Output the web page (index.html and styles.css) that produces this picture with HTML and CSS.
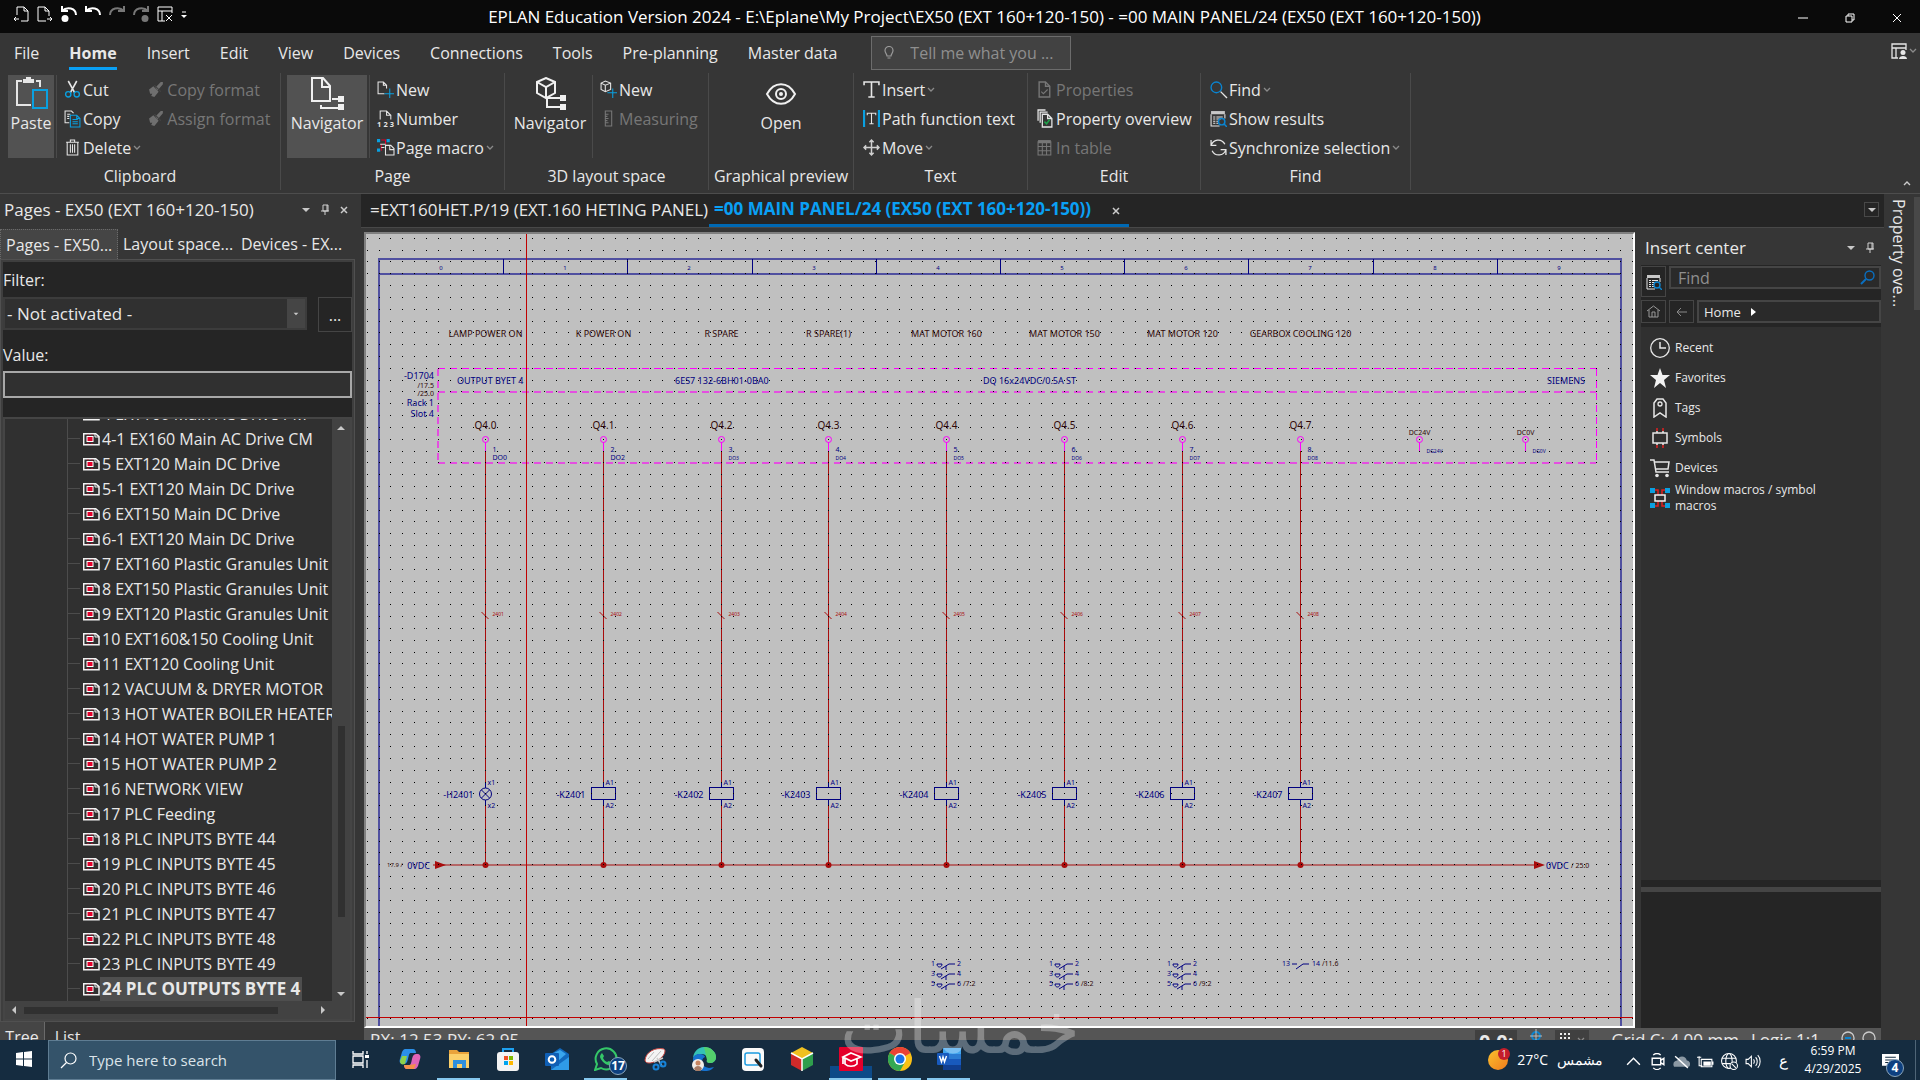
FILE: index.html
```
<!DOCTYPE html>
<html lang="en">
<head>
    <meta charset="UTF-8">
    <meta name="viewport" content="width=device-width, initial-scale=1.0">
    <title>EPLAN Education Version 2024</title>
    <link rel="stylesheet" href="styles.css">
</head>
<body>
    <svg class="defs" aria-hidden="true">
        <symbol id="chev" viewBox="0 0 8 8"><path d="M1 2l3 3 3-3" fill="none" stroke="#8a8a8a" stroke-width="1.3"/></symbol>
        <symbol id="down" viewBox="0 0 10 10"><path d="M1 3h8L5 7z" fill="#c8c8c8"/></symbol>
        <symbol id="pin" viewBox="0 0 10 12"><path d="M3 1h5v6H3zM1 7h8M5 7v4M7 1v6" fill="none" stroke="#d0d0d0"/></symbol>
        <symbol id="brush" viewBox="0 0 16 16"><path d="M1 8l4-3 5 5-4 5-3-1 1-2-2 0zM7 6l5-5h2v2l-5 6z" fill="#6f6f6f"/><path d="M6 4l6 6" stroke="#444"/></symbol>
        <symbol id="results" viewBox="0 0 16 16"><path d="M1 1h13v3H1z" fill="#c8c8c8"/><path d="M1 4v11h8M14 4v4M3 6.500h2m1 0h6M3 8.500h2m1 0h4M3 10.500h2m1 0h2M3 12.500h2m1 0h2" fill="none" stroke="#e6e6e6"/><circle cx="11" cy="11" r="3" fill="none" stroke="#0a84d0" stroke-width="1.4"/><path d="M13 13l3 3" stroke="#0a84d0" stroke-width="1.4"/></symbol>
        <symbol id="schem" viewBox="0 0 17 14"><path d="M.7 1.7h12l3.3 3v8H.7z" fill="none" stroke="#f2f2f2" stroke-width="1.5"/><path d="M12 2v3h4" fill="none" stroke="#f2f2f2"/><rect x="4" y="4.500" width="6" height="5" fill="#e4002b" stroke="#fff"/><path d="M5 2.500v1M9 2.500v1M5 11v1M9 11v1" stroke="#e4002b"/></symbol>
        <symbol id="doc" viewBox="0 0 16 16"><path d="M2 1h6l4 4v10H2z" fill="none" stroke="currentColor" stroke-width="1.300"/><path d="M8 1v4h4" fill="none" stroke="currentColor" stroke-width="1.300"/></symbol>
    </svg>

    <header class="titlebar">
        <div class="quick">
            <button aria-label="Previous page"><svg viewBox="0 0 16 16"><path d="M4 9V1h7l4 4v10H8M11 1v4h4M6 13H1m2-2l-2 2 2 2"/></svg></button>
            <button aria-label="Next page"><svg viewBox="0 0 16 16"><path d="M9 15H1V1h7l4 4v5M8 1v4h4M10 13h5m-2-2l2 2-2 2"/></svg></button>
            <button aria-label="Undo list"><svg viewBox="0 0 16 16"><path d="M1 5C6 0 15 2 15 9M1 0v5h6" stroke-width="2"/><circle cx="4" cy="12.500" r="3.500" fill="#fff" stroke="none"/></svg></button>
            <button aria-label="Undo"><svg viewBox="0 0 16 16"><path d="M1 5C6 0 15 2 15 9M1 0v5h6" stroke-width="2"/></svg></button>
            <button aria-label="Redo" class="off"><svg viewBox="0 0 16 16"><path d="M15 5C10 0 1 2 1 9M15 0v5H9" stroke-width="2"/></svg></button>
            <button aria-label="Redo list" class="off"><svg viewBox="0 0 16 16"><path d="M15 5C10 0 1 2 1 9M15 0v5H9" stroke-width="2"/><circle cx="12" cy="12.500" r="3.500" fill="#777" stroke="none"/></svg></button>
            <button aria-label="Close layout"><svg viewBox="0 0 16 16"><path d="M8 15H1V1h14v6M1 5h14M5 5v10M9 9l6 6M15 9l-6 6"/></svg></button>
            <button aria-label="More" class="tiny"><svg viewBox="0 0 6 16"><path d="M1 6h4"/><path d="M0 9h6l-3 3z" fill="#fff" stroke="none"/></svg></button>
        </div>
        <div class="caption">EPLAN Education Version 2024 - E:\Eplane\My Project\EX50 (EXT 160+120-150) - =00 MAIN PANEL/24 (EX50 (EXT 160+120-150))</div>
        <div class="win">
            <button aria-label="Minimize"><svg viewBox="0 0 10 10"><path d="M0 5h10"/></svg></button>
            <button aria-label="Restore"><svg viewBox="0 0 10 10"><path d="M1 3h6v6H1zM3 3V1h6v6H7"/></svg></button>
            <button aria-label="Close"><svg viewBox="0 0 10 10"><path d="M1 1l8 8M9 1L1 9"/></svg></button>
        </div>
    </header>

    <nav class="menu">
        <a href="#">File</a>
        <a href="#" class="active">Home</a>
        <a href="#">Insert</a>
        <a href="#">Edit</a>
        <a href="#">View</a>
        <a href="#">Devices</a>
        <a href="#">Connections</a>
        <a href="#">Tools</a>
        <a href="#">Pre-planning</a>
        <a href="#">Master data</a>
        <label class="tell">
            <svg viewBox="0 0 10 14" width="10" height="14"><path d="M3 10C3 8 1 7 1 4.500a4 4 0 018 0C9 7 7 8 7 10zM3.500 12h3" fill="none" stroke="#9a9a9a" stroke-width="1.200"/></svg>
            <input type="text" placeholder="Tell me what you ..." aria-label="Tell me what you want to do">
        </label>
        <button class="workspace" aria-label="Workspace">
            <svg viewBox="0 0 16 16" width="16" height="16"><path d="M7 15H1V1h14v6M1 5h14M5 5v10" fill="none" stroke="#e6e6e6" stroke-width="1.300"/><circle cx="12" cy="9.500" r="2.500" fill="#e6e6e6"/><path d="M8 16c0-4 8-4 8 0z" fill="#e6e6e6"/></svg>
            <svg width="8" height="8"><use href="#chev"/></svg>
        </button>
    </nav>

    <section class="ribbon">
        <div class="group clip">
            <div class="tools">
                <button class="big on"><svg viewBox="0 0 34 34"><path d="M8 4H3v24h14M22 4h4v6" fill="none" stroke="#e6e6e6" stroke-width="2"/><path d="M9 2h3V0h5v2h3v4H9z" fill="#e6e6e6"/><path d="M19 13h14v18H19z" fill="none" stroke="#0aa0e0" stroke-width="2"/></svg>Paste</button>
                <div class="stack">
                    <button><svg viewBox="0 0 16 16"><path d="M4 0l6 11M12 0L6 11" stroke="#e6e6e6" stroke-width="1.500"/><g fill="none" stroke="#0aa0e0" stroke-width="1.300"><circle cx="4" cy="12.500" r="2.500"/><circle cx="12" cy="12.500" r="2.500"/></g></svg>Cut</button>
                    <button><svg viewBox="0 0 16 16"><path d="M5 12H1V1h6l2 2M3 4h3M3 6h2M3 8h2" fill="none" stroke="#e6e6e6"/><path d="M6 5h6l3 3v8H6zM12 5v3h3M8 9h5M8 11h5M8 13h5" fill="none" stroke="#0aa0e0"/></svg>Copy</button>
                    <button><svg viewBox="0 0 16 16"><path d="M2 3h12M6 3V1h4v2M3 3v12h10V3M6 5v8M8 5v8M10 5v8" fill="none" stroke="#e6e6e6"/></svg>Delete<svg class="c"><use href="#chev"/></svg></button>
                </div>
                <div class="stack">
                    <button disabled><svg><use href="#brush"/></svg>Copy format</button>
                    <button disabled><svg><use href="#brush"/></svg>Assign format</button>
                </div>
            </div>
            <h2>Clipboard</h2>
        </div>
        <div class="group page">
            <div class="tools">
                <button class="big on"><svg viewBox="0 0 34 34"><path d="M2 1h11l7 8v15H2zM12 1v9h8M22 22h6M11 28v3h17" fill="none" stroke="#f0f0f0" stroke-width="2"/><path d="M28 19h6v6h-6zM28 27h6v6h-6z" fill="#f0f0f0"/></svg>Navigator</button>
                <div class="stack">
                    <button><svg viewBox="0 0 16 16"><path d="M7 12H1V1h5l3 3v3M6 1v3h3" fill="none" stroke="#e6e6e6"/><path d="M7 12h9M12 7v9" stroke="#0aa0e0"/></svg>New</button>
                    <button><svg viewBox="0 0 16 16"><path d="M3 9V1h6l4 4v4M9 1v4h4" fill="none" stroke="#e6e6e6"/><text x="0" y="16" class="ic">1</text><text x="6" y="16" class="ic">2</text><text x="12" y="16" class="ic">3</text></svg>Number</button>
                    <button><svg viewBox="0 0 16 16"><path d="M0 0h3v3H0zM9 0h3v3H9zM0 9h3v3H0z" fill="#0aa0e0"/><path d="M4 1h4v4M4 5v6" fill="none" stroke="#e4002b"/><path d="M3 5h5M4 8h3M8 6h5l3 3v6H8zM12 6v4h4" fill="none" stroke="#e6e6e6"/></svg>Page macro<svg class="c"><use href="#chev"/></svg></button>
                </div>
            </div>
            <h2>Page</h2>
        </div>
        <div class="group space">
            <div class="tools">
                <button class="big"><svg viewBox="0 0 34 34"><path d="M4 5l9-4 9 4v11l-9 5-9-5zM4 5l9 5 9-5M13 10v11M27 21H14v9h13" fill="none" stroke="#f0f0f0" stroke-width="2"/><path d="M27 18h6v6h-6zM27 27h6v6h-6z" fill="#f0f0f0"/></svg>Navigator</button>
                <div class="stack">
                    <button><svg viewBox="0 0 16 16"><path d="M1 2l4-2 5 2v6l-5 2-4-2zM1 2l4 2 5-2M5 4v6" fill="none" stroke="#e6e6e6"/><path d="M7 11h9M12 7v9" stroke="#0aa0e0"/></svg>New</button>
                    <button disabled><svg viewBox="0 0 16 16"><path d="M5 1h6v14H5zM5 4h3M5 6h2M5 8h3M5 10h2M5 12h3" fill="none" stroke="#777"/></svg>Measuring</button>
                </div>
            </div>
            <h2>3D layout space</h2>
        </div>
        <div class="group preview">
            <div class="tools">
                <button class="big"><svg viewBox="0 0 34 34"><path d="M3 17C10 4 24 4 31 17C24 30 10 30 3 17z" fill="none" stroke="#f0f0f0" stroke-width="2"/><circle cx="17" cy="17" r="5" fill="none" stroke="#f0f0f0" stroke-width="2"/><circle cx="17" cy="17" r="2" fill="#f0f0f0"/></svg>Open</button>
            </div>
            <h2>Graphical preview</h2>
        </div>
        <div class="group text">
            <div class="tools">
                <div class="stack">
                    <button><svg viewBox="0 0 16 16"><path d="M1 4V1h14v3M8 1v14M5 15h6" fill="none" stroke="#e6e6e6" stroke-width="1.500"/></svg>Insert<svg class="c"><use href="#chev"/></svg></button>
                    <button><svg viewBox="0 0 16 16"><path d="M1 0v16M15 0v16" stroke="#0aa0e0" stroke-width="2"/><path d="M4 5V3h8v2M8 3v10M6 13h4" fill="none" stroke="#e6e6e6"/></svg>Path function text</button>
                    <button><svg viewBox="0 0 16 16"><path d="M8 1v14M1 8h14M6 3l2-2 2 2M6 13l2 2 2-2M3 6L1 8l2 2M13 6l2 2-2 2" fill="none" stroke="#d0d0d0" stroke-width="1.400"/></svg>Move<svg class="c"><use href="#chev"/></svg></button>
                </div>
            </div>
            <h2>Text</h2>
        </div>
        <div class="group edit">
            <div class="tools">
                <div class="stack">
                    <button disabled><svg viewBox="0 0 16 16"><use href="#doc"/><path d="M4 10l2 2 4-4" fill="none" stroke="#777"/></svg>Properties</button>
                    <button><svg viewBox="0 0 16 16"><path d="M1 10V0h7M3 12V2h7M5 4h5l4 4v8H5zM10 4v4h4" fill="none" stroke="#e6e6e6" stroke-width="1.200"/><path d="M7 11l2 2 3-4" fill="none" stroke="#1fa14a" stroke-width="1.500"/></svg>Property overview</button>
                    <button disabled><svg viewBox="0 0 16 16"><path d="M1 1h12v3H1z" fill="#777"/><path d="M1 2v13h12V2M1 7h12M1 11h12M5 3v12M9 3v12" fill="none" stroke="#777"/></svg>In table</button>
                </div>
            </div>
            <h2>Edit</h2>
        </div>
        <div class="group find">
            <div class="tools">
                <div class="stack">
                    <button><svg viewBox="0 0 16 16"><circle cx="6" cy="6" r="5" fill="none" stroke="#0a84d0" stroke-width="1.300"/><path d="M10 10l6 6" stroke="#e6e6e6" stroke-width="1.300"/></svg>Find<svg class="c"><use href="#chev"/></svg></button>
                    <button><svg><use href="#results"/></svg>Show results</button>
                    <button><svg viewBox="0 0 16 16"><path d="M1 6C3 0 11-1 14 5M1 1v5h5M15 10c-2 6-10 7-13 1M15 15v-5h-5" fill="none" stroke="#e6e6e6" stroke-width="1.200"/></svg>Synchronize selection<svg class="c"><use href="#chev"/></svg></button>
                </div>
            </div>
            <h2>Find</h2>
        </div>
        <button class="collapse" aria-label="Collapse ribbon"><svg viewBox="0 0 8 8" width="8" height="8"><path d="M1 5l3-3 3 3" fill="none" stroke="#ccc" stroke-width="1.400"/></svg></button>
    </section>

    <main class="work">
        <aside class="pages">
            <div class="panel-head">
                <h3>Pages - EX50 (EXT 160+120-150)</h3>
                <svg width="10" height="10"><use href="#down"/></svg>
                <svg width="10" height="12"><use href="#pin"/></svg>
                <svg width="10" height="10" viewBox="0 0 10 10"><path d="M2 2l6 6M8 2L2 8" stroke="#ccc" stroke-width="1.500"/></svg>
            </div>
            <div class="panel-tabs">
                <button class="active">Pages - EX50...</button>
                <button>Layout space...</button>
                <button>Devices - EX...</button>
            </div>
            <div class="panel-box">
                <div class="filter">
                    <label for="filter">Filter:</label>
                    <div class="filter-row">
                        <div class="combo">
                            <select id="filter"><option>- Not activated -</option></select>
                            <span><svg width="6" height="6"><use href="#down"/></svg></span>
                        </div>
                        <button>...</button>
                    </div>
                    <label for="value">Value:</label>
                    <input id="value" type="text">
                </div>
                <div class="tree-wrap">
                    <ul class="tree" id="tree"></ul>
                    <div class="vbar">
                        <svg width="10" height="10" viewBox="0 0 10 10"><path d="M1 7h8L5 3z" fill="#c8c8c8"/></svg>
                        <div class="thumb"></div>
                        <svg width="10" height="10"><use href="#down"/></svg>
                    </div>
                    <div class="hbar">
                        <svg width="10" height="10" viewBox="0 0 10 10"><path d="M7 1v8L3 5z" fill="#c8c8c8"/></svg>
                        <div class="thumb"></div>
                        <svg width="10" height="10" viewBox="0 0 10 10"><path d="M3 1v8l4-4z" fill="#c8c8c8"/></svg>
                    </div>
                </div>
            </div>
            <div class="view-tabs"><button class="active">Tree</button><button>List</button></div>
        </aside>

        <section class="center">
            <div class="doc-tabs">
                <button>=EXT160HET.P/19 (EXT.160 HETING PANEL)</button>
                <button class="active">=00 MAIN PANEL/24 (EX50 (EXT 160+120-150)) <svg width="8" height="8" viewBox="0 0 8 8"><path d="M1 1l6 6M7 1L1 7" stroke="#ccc" stroke-width="1.500"/></svg></button>
                <div class="doc-list"><svg width="10" height="10"><use href="#down"/></svg></div>
            </div>
            <div class="docs">
                <div class="sheet"><svg id="sheet" viewBox="366 234 1267 792" preserveAspectRatio="xMinYMin slice"></svg></div>
                <aside class="insert">
                    <div class="panel-head">
                        <h3>Insert center</h3>
                        <svg width="10" height="10"><use href="#down"/></svg>
                        <svg width="10" height="12"><use href="#pin"/></svg>
                    </div>
                    <div class="insert-bar">
                        <div class="bar-row">
                            <button class="tall" aria-label="Results"><svg width="16" height="16"><use href="#results"/></svg></button>
                            <label class="field"><input type="text" placeholder="Find" aria-label="Find"><svg width="15" height="15" viewBox="0 0 15 15"><circle cx="9.500" cy="5.500" r="4.500" fill="none" stroke="#0a6fc0" stroke-width="1.400"/><path d="M6 9l-5 5" stroke="#0a6fc0" stroke-width="2"/></svg></label>
                        </div>
                        <div class="bar-row">
                            <button aria-label="Home"><svg width="13" height="13" viewBox="0 0 13 13"><path d="M0 6l6.500-5L13 6M2 5v7h9V5M5 12V7h3v5" fill="none" stroke="#9a9a9a"/></svg></button>
                            <button aria-label="Back"><svg width="11" height="10" viewBox="0 0 11 10"><path d="M11 5H1m4-4L1 5l4 4" fill="none" stroke="#8a8a8a"/></svg></button>
                            <div class="crumb">Home <svg width="5" height="8" viewBox="0 0 5 8"><path d="M0 0v8l5-4z" fill="#fff"/></svg></div>
                        </div>
                    </div>
                    <ul class="insert-list">
                        <li><svg viewBox="0 0 20 20"><circle cx="10" cy="10" r="9.300" fill="none" stroke="#e6e6e6" stroke-width="1.300"/><path d="M10 4v6h6" fill="none" stroke="#e6e6e6" stroke-width="1.500"/></svg>Recent</li>
                        <li><svg viewBox="0 0 20 20"><path d="M10 0l2.500 7H20l-6 5 2 8-6-5-6 5 2-8-6-5h7.500z" fill="#f2f2f2"/></svg>Favorites</li>
                        <li><svg viewBox="0 0 20 20"><path d="M4 5l3-4h6l3 4v14l-6-4-6 4z" fill="none" stroke="#e6e6e6" stroke-width="1.500"/><circle cx="10" cy="6" r="2" fill="none" stroke="#e6e6e6" stroke-width="1.300"/></svg>Tags</li>
                        <li><svg viewBox="0 0 20 20"><path d="M7 5V3M13 5V3M7 17v-2M13 17v-2M3 5h14v10H3z" fill="none" stroke="#e6e6e6" stroke-width="1.500"/><path d="M7 3V0M13 3V0M7 20v-3M13 20v-3" stroke="#e02020" stroke-width="1.500"/></svg>Symbols</li>
                        <li><svg viewBox="0 0 20 20"><path d="M0 2h4l2 12h13M5 4h14l-1 7H6" fill="none" stroke="#e6e6e6" stroke-width="1.500"/><circle cx="7" cy="17.500" r="1.800" fill="#e6e6e6"/><circle cx="17" cy="17.500" r="1.800" fill="#e6e6e6"/></svg>Devices</li>
                        <li><svg viewBox="0 0 20 20"><path d="M5 2h3v16H5M15 2h-3v16h3" fill="none" stroke="#e02020" stroke-width="1.500"/><path d="M5 7h10v6H5z" fill="#303030" stroke="#f2f2f2" stroke-width="1.500"/><path d="M0 0h5v5H0zM15 0h5v5h-5zM0 15h5v5H0zM15 15h5v5h-5z" fill="#0aa0e0"/></svg><span>Window macros / symbol macros</span></li>
                    </ul>
                    <div class="insert-split"></div>
                    <div class="insert-preview"></div>
                </aside>
            </div>
            <footer class="status">
                <span class="coords">RX: 12.53 RY: 62.95</span>
                <span class="snap"><b>0,0:</b></span>
                <svg class="target" width="14" height="14" viewBox="0 0 14 14"><circle cx="7" cy="8" r="4" fill="none" stroke="#0a84d0" stroke-width="2"/><path d="M7 1v12M1 8h12" stroke="#bbb"/></svg>
                <span class="snap dots"><svg width="12" height="12" viewBox="0 0 12 12"><path d="M1 2h10M1 6h10M1 10h10" stroke="#eee" stroke-width="2" stroke-dasharray="2 2"/></svg><svg width="8" height="8"><use href="#chev"/></svg></span>
                <span class="gridsize">Grid C: 4.00 mm</span>
                <span>Logic 1:1</span>
                <svg class="zoomer" width="36" height="14" viewBox="0 0 36 14"><g fill="none" stroke="#ccc" stroke-width="1.300"><circle cx="8" cy="10" r="6"/><circle cx="29" cy="10" r="6"/></g><path d="M5 10h6" stroke="#0a84d0" stroke-width="2"/></svg>
            </footer>
        </section>

        <aside class="dock"><button>Property ove...</button></aside>
    </main>

    <footer class="taskbar">
        <button class="start" aria-label="Start"><svg viewBox="0 0 16 16" width="16" height="16"><path d="M0 2l7-1v6.500H0zM8 1l8-1v7.500H8zM0 8.500h7V15l-7-1zM8 8.500h8V16l-8-1z" fill="#fff"/></svg></button>
        <label class="search">
            <svg viewBox="0 0 17 17" width="17" height="17"><circle cx="10.500" cy="6.500" r="5.500" fill="none" stroke="#fff" stroke-width="1.200"/><path d="M6.500 10.500L1 16" stroke="#fff" stroke-width="1.200"/></svg>
            <input type="text" placeholder="Type here to search" aria-label="Type here to search">
        </label>
        <div class="apps">
            <button aria-label="Task view"><svg viewBox="0 0 24 24"><path d="M4 4v3h10V4M4 9h10v7H4zM4 21v-3h10v3M18 4v3M18 13v8" fill="none" stroke="#fff" stroke-width="1.300"/><path d="M16 8h4v3h-4z" fill="#fff"/></svg></button>
            <button aria-label="Copilot"><svg viewBox="0 0 24 24"><path d="M7 2h8c2 0 3 2 3 4h-5c-2 0-2 2-3 6s-2 5-5 5-4-2-3-5l2-7c1-2 2-3 3-3z" fill="#2b8fe8"/><path d="M4 9l-2 5c0 3 2 4 5 3l2-8z" fill="#8fd04a"/><path d="M17 22H9c-2 0-3-2-3-4h5c2 0 2-2 3-6s2-5 5-5 4 2 3 5l-2 7c-1 2-2 3-3 3z" fill="#e064b8"/><path d="M9 22c-2 0-3-2-3-4h5l7-1-2 5z" fill="#f5904a"/></svg></button>
            <button aria-label="File Explorer" class="run"><svg viewBox="0 0 24 24"><path d="M2 3h8l2 2h10v16H2z" fill="#e9a33b"/><path d="M2 7h20v14H2z" fill="#fbd06a"/><path d="M6 13h13v8h-4v-4h-5v4H6z" fill="#2f8fdd"/></svg></button>
            <button aria-label="Microsoft Store"><svg viewBox="0 0 24 24"><path d="M7 6V2h10v4" fill="none" stroke="#1ea1f0" stroke-width="2"/><rect x="1" y="5" width="22" height="19" rx="3" fill="#f3f3f3"/><path d="M8 9h4v4H8z" fill="#f25022"/><path d="M13 9h4v4h-4z" fill="#7fba00"/><path d="M8 14h4v4H8z" fill="#00a4ef"/><path d="M13 14h4v4h-4z" fill="#ffb900"/></svg></button>
            <button aria-label="Outlook"><svg viewBox="0 0 24 24"><path d="M6 7l9-6 9 6v16H6z" fill="#1269bd"/><path d="M9 6l6-3 6 4-8 7z" fill="#39a6ee"/><path d="M6 23l18-13v13z" fill="#2f9be8"/><rect x="0" y="6" width="14" height="13" rx="1" fill="#0f5fb5"/><circle cx="7" cy="12.500" r="3.300" fill="none" stroke="#fff" stroke-width="2"/></svg></button>
            <button aria-label="WhatsApp" class="run"><svg viewBox="0 0 24 24"><path d="M1 23l2-6a10.500 10.500 0 114 4z" fill="#183246" stroke="#35c768" stroke-width="2"/><path d="M8 6l2 3-1 2c1 2 2 3 4 4l2-1 3 2c0 2-2 3-4 2-4-1-7-5-8-8 0-2 1-3 2-4z" fill="#35c768"/></svg><span class="badge">17</span></button>
            <button aria-label="Snipping Tool"><svg viewBox="0 0 24 24"><path d="M2 13C3 5 12 0 21 2c3 2-1 10-10 13-5 2-9 1-9-2z" fill="#f4f4f4" stroke="#c9413b"/><path d="M5 12l6-7m-2 9L18 4" stroke="#bbb"/><path d="M11 15l9-4M14 11l5 8" stroke="#ccc" stroke-width="1.500"/><circle cx="13" cy="20" r="2.500" fill="none" stroke="#1683d8" stroke-width="2"/><circle cx="20" cy="17" r="2.500" fill="none" stroke="#1683d8" stroke-width="2"/></svg></button>
            <button aria-label="Edge"><svg viewBox="0 0 24 24"><path d="M1 12C1 5 6 0 12 0c7 0 12 5 12 10 0 4-3 6-6 6-2 0-4-1-3-3 1-3-2-6-5-6-5 0-9 2-9 5z" fill="#35c1b5"/><path d="M12 0c7 0 12 5 12 10 0 4-3 6-6 6-2 0-4-1-3-3z" fill="#53d06c"/><path d="M1 12c0-3 3-5 7-5 3 0 5 2 5 3-5 2-4 10 4 11 2 0 4-1 5-1-3 4-6 4-10 4C6 24 1 18 1 12z" fill="#1672cf"/><circle cx="6" cy="18" r="6" fill="#f1ece6"/><circle cx="6" cy="16" r="2.500" fill="#c78560"/><path d="M2 22c1-4 7-4 8 0-2 3-6 3-8 0z" fill="#a77b64"/></svg></button>
            <button aria-label="Quick Assist"><svg viewBox="0 0 24 24"><rect x="1" y="1" width="22" height="23" rx="4" fill="#fafafa"/><rect x="4" y="6" width="15" height="12" rx="2" fill="none" stroke="#1b9be0" stroke-width="1.500"/><path d="M15 13l5 6" stroke="#222" stroke-width="3" stroke-linecap="round"/></svg></button>
            <button aria-label="Cube"><svg viewBox="0 0 24 24"><path d="M12 0l11 6-11 6L1 6z" fill="#f0c020"/><path d="M1 6l11 6v12L1 18z" fill="#d02a2a"/><path d="M23 6l-11 6v12l11-6z" fill="#2f9e4c"/><path d="M1 6l11 6 11-6M12 12v12" fill="none" stroke="#fff" stroke-width="1.500"/></svg></button>
            <button aria-label="EPLAN" class="run current"><svg viewBox="0 0 24 24"><rect width="24" height="24" rx="1" fill="#e4002b"/><path d="M12 6l10 4-10 4-8-4zM6 12v5c3 3 9 3 12 0v-5M4 10v7" fill="none" stroke="#fff" stroke-width="1.700"/></svg></button>
            <button aria-label="Chrome" class="run"><svg viewBox="0 0 24 24"><circle cx="12" cy="12" r="12" fill="#fbc116"/><path d="M12 12L1.600 6A12 12 0 0122.400 6z" fill="#ea4335"/><path d="M12 12L1.600 6A12 12 0 0012 24l5-9z" fill="#34a853"/><circle cx="12" cy="12" r="6" fill="#fff"/><circle cx="12" cy="12" r="4.500" fill="#1a73e8"/></svg></button>
            <button aria-label="Word" class="run"><svg viewBox="0 0 24 24"><path d="M6 1h18v6H6z" fill="#41a5ee"/><path d="M6 7h18v5H6z" fill="#2b7cd3"/><path d="M6 12h18v6H6z" fill="#185abd"/><path d="M6 18h18v5H6z" fill="#103f91"/><rect y="6" width="12" height="12" rx="1" fill="#185abd"/><path d="M2.500 9l2 6L6 10l1.500 5 2-6" fill="none" stroke="#fff" stroke-width="1.400"/></svg></button>
        </div>
        <div class="tray">
            <button class="weather"><span class="sun"><i>1</i></span><span>27°C</span><span dir="rtl" lang="ar">مشمس</span></button>
            <button aria-label="Hidden icons"><svg viewBox="0 0 16 16"><path d="M2 11l6-6 6 6" fill="none" stroke="#fff" stroke-width="1.300"/></svg></button>
            <button aria-label="Meet now"><svg viewBox="0 0 16 16"><path d="M3 5h8v6H3zM11 7l3-2v6l-3-2M4 2c2-2 5-2 7 0M4 14c2 2 5 2 7 0" fill="none" stroke="#fff" stroke-width="1.300"/></svg></button>
            <button aria-label="OneDrive"><svg viewBox="0 0 16 16"><path d="M1 13C-1 9 2 7 4 7c1-5 8-5 9 0 3 0 4 4 2 6z" fill="#8b98a3"/><path d="M2 3l12 11" stroke="#fff" stroke-width="1.300"/></svg></button>
            <button aria-label="Battery"><svg viewBox="0 0 16 16"><path d="M4 6h10v7H4zM15 8v3M2 3v5m-2-4h4M2 8v4h3" fill="none" stroke="#fff"/><path d="M6 8h7v4H6z" fill="#fff"/></svg></button>
            <button aria-label="Network"><svg viewBox="0 0 16 16"><g fill="none" stroke="#fff"><circle cx="7.500" cy="7.500" r="7"/><ellipse cx="7.500" cy="7.500" rx="3" ry="7"/><path d="M1 5h13M1 10h9"/></g><circle cx="12" cy="12" r="3.500" fill="#152c40" stroke="#fff"/><path d="M10 10l4 4" stroke="#fff"/></svg></button>
            <button aria-label="Volume"><svg viewBox="0 0 16 16"><path d="M1 6h2l3-3v10l-3-3H1zM8 6c1 1 1 3 0 4M10 4c2 2 2 6 0 8M12 2c3 3 3 9 0 12" fill="none" stroke="#fff"/></svg></button>
            <button class="lang" lang="ar">ع</button>
            <button class="clock"><span>6:59 PM</span><span>4/29/2025</span></button>
            <button class="notes" aria-label="Notifications"><svg viewBox="0 0 16 16"><path d="M0 1h16v11H8l-3 3v-3H0z" fill="#fff"/><path d="M3 4h10M3 6.500h10M3 9h7" stroke="#152c40"/></svg><span class="badge">4</span></button>
        </div>
    </footer>

    <div class="stamp" lang="ar" dir="rtl">خمسات</div>

    <script src="script.js"></script>
</body>
</html>
```
FILE: styles.css
```
* {
    box-sizing: border-box;
}
body {
    margin: 0;
    height: 100vh;
    display: flex;
    flex-direction: column;
    overflow: hidden;
    background: #363636;
    color: #e8e8e8;
    font-family: "Open Sans", "Noto Sans", sans-serif;
    font-size: 16px;
    line-height: 24px;
}
button, input, select {
    font: inherit;
    color: inherit;
    background: none;
    border: 0;
    margin: 0;
    padding: 0;
    white-space: nowrap;
}
input, select {
    width: 100%;
    min-width: 0;
    outline: 0;
    appearance: none;
}
a {
    color: inherit;
    text-decoration: none;
}
h2, h3 {
    margin: 0;
    font-size: 16px;
    font-weight: normal;
}
ul {
    list-style: none;
    margin: 0;
    padding: 0;
}
svg {
    flex: none;
}
.defs {
    position: absolute;
    width: 0;
    height: 0;
}

/* title bar */
.titlebar {
    flex: none;
    height: 33px;
    background: #0a0a0a;
    display: flex;
    align-items: center;
}
.quick {
    flex: 1;
    display: flex;
    gap: 8px;
    padding-left: 13px;
    margin-bottom: 5px;
}
.quick button, .quick svg {
    width: 16px;
    height: 16px;
    display: block;
}
.quick .tiny, .quick .tiny svg {
    width: 6px;
}
.quick svg, .win svg {
    fill: none;
    stroke: #fff;
}
.quick .off svg {
    stroke: #777;
}
.caption {
    padding-left: 36px;
    color: #fff;
    font-size: 17px;
}
.win {
    flex: 1;
    display: flex;
    justify-content: flex-end;
}
.win button {
    width: 47px;
    height: 33px;
}
.win svg {
    width: 10px;
    height: 10px;
}

/* menu */
.menu {
    flex: none;
    height: 40px;
    padding: 3px 3px 0 14px;
    display: flex;
    gap: 30px;
}
.menu a {
    height: 34px;
    line-height: 34px;
    white-space: nowrap;
}
.menu .active {
    font-weight: bold;
    border-bottom: 3px solid #0aa0f5;
}
.tell {
    display: flex;
    align-items: center;
    gap: 16px;
    width: 200px;
    height: 34px;
    margin-left: 4px;
    padding: 0 12px;
    border: 1px solid #6c6c6c;
    background: #424242;
}
.tell input::placeholder, .field input::placeholder {
    color: #8f8f8f;
    opacity: 1;
}
.workspace {
    margin-left: auto;
    display: flex;
    align-items: center;
    gap: 2px;
    height: 30px;
}

/* ribbon */
.ribbon {
    flex: none;
    display: flex;
    height: 121px;
    padding-bottom: 3px;
    border-bottom: 1px solid #4d4d4d;
}
.group {
    flex: none;
    display: flex;
    flex-direction: column;
    border-right: 1px solid #4a4a4a;
}
.group h2 {
    text-align: center;
    padding-bottom: 2px;
}
.clip { width: 281px; }
.page { width: 224px; }
.space { width: 204px; }
.preview { width: 145px; }
.text { width: 174px; }
.edit { width: 173px; }
.find { width: 210px; }
.tools {
    flex: 1;
    min-height: 0;
    display: flex;
    padding: 2px 0 0 9px;
}
.clip .tools {
    padding-left: 8px;
}
.page .tools {
    padding-left: 6px;
}
.space .tools {
    padding-left: 5px;
}
.preview .tools {
    padding: 2px 0 0;
    justify-content: center;
}
.big {
    flex: none;
    display: flex;
    flex-direction: column;
    align-items: center;
    width: 46px;
    height: 83px;
    padding-top: 2px;
}
.big svg {
    width: 34px;
    height: 34px;
}
.page .big, .space .big {
    width: 80px;
}
.big.on {
    background: #525252;
}
.stack {
    display: flex;
    flex-direction: column;
    margin-left: 2px;
    border-left: 1px solid #4a4a4a;
    height: 83px;
}
.clip .stack, .page .stack, .space .stack {
    padding-left: 7px;
}
.clip .stack + .stack, .text .stack, .edit .stack, .find .stack {
    border: 0;
    margin: 0;
    padding: 0;
}
.clip .stack + .stack {
    margin-left: 7px;
}
.stack button {
    flex: none;
    display: flex;
    align-items: center;
    gap: 2px;
    height: 29px;
}
.stack button:disabled {
    color: #777;
}
.stack svg {
    width: 17px;
    height: 17px;
    overflow: visible;
}
.stack .c {
    width: 8px;
    height: 8px;
}
.ic {
    font-size: 7px;
    font-weight: bold;
    fill: #e6e6e6;
}
.collapse {
    margin-left: auto;
    align-self: flex-end;
    width: 26px;
    line-height: 16px;
}

/* work area */
.work {
    flex: 1;
    min-height: 0;
    display: flex;
}
.panel-head {
    flex: none;
    display: flex;
    align-items: center;
    gap: 9px;
    height: 32px;
    padding: 0 6px 0 4px;
}
.panel-head h3 {
    flex: 1;
    font-size: 17px;
    white-space: nowrap;
}
.pages {
    flex: none;
    width: 355px;
    display: flex;
    flex-direction: column;
    overflow: hidden;
}
.panel-tabs {
    flex: none;
    display: flex;
    height: 33px;
    padding-top: 3px;
}
.panel-tabs button {
    width: 118px;
    padding: 0 0 0 5px;
    text-align: left;
    overflow: hidden;
}
.panel-tabs .active {
    background: #454545;
    border: 1px dotted #6a6a6a;
    border-bottom: 0;
}
.panel-box {
    flex: 1;
    min-height: 0;
    display: flex;
    flex-direction: column;
    padding: 2px 2px 0;
    border: 1px solid #505050;
    background: #3e3e3e;
}
.filter {
    background: #252525;
    padding: 6px 0 19px;
}
.filter label {
    display: block;
    height: 28px;
}
.filter-row {
    display: flex;
    justify-content: space-between;
    height: 47px;
    padding-top: 1px;
}
.combo {
    display: flex;
    width: 304px;
    height: 33px;
    border: 2px solid #3c3c3c;
    background: #303030;
    font-size: 17px;
}
.combo select {
    padding-left: 2px;
}
.combo span {
    flex: none;
    width: 18px;
    text-align: center;
    background: #454545;
}
.filter-row button {
    width: 34px;
    height: 35px;
    border: 1px solid #454545;
}
#value {
    display: block;
    height: 27px;
    border: 2px solid #a8a8a8;
    background: #303030;
}
.tree-wrap {
    flex: 1;
    min-height: 0;
    display: grid;
    grid-template: minmax(0, 1fr) 18px / minmax(0, 1fr) 18px;
    border: 2px solid #454545;
    background: #424242;
}
.tree {
    display: flex;
    flex-direction: column;
    justify-content: flex-end;
    overflow: hidden;
    background: #303030;
}
.tree li {
    display: flex;
    align-items: center;
    flex: none;
    height: 25px;
    margin-left: 62px;
    border-left: 1px solid #4c4c4c;
    white-space: nowrap;
}
.tree li::before {
    content: "";
    flex: none;
    width: 12px;
    margin-right: 3px;
    border-top: 1px solid #4c4c4c;
}
.tree span {
    padding: 0 2px;
}
.tree .active span {
    background: #4e4e4e;
    font-size: 17px;
    font-weight: bold;
}
.vbar {
    display: flex;
    flex-direction: column;
    align-items: center;
    padding: 4px 0 2px;
}
.vbar .thumb {
    flex: none;
    width: 7px;
    height: 191px;
    margin: auto 0 72px;
    background: #303030;
}
.hbar {
    display: flex;
    align-items: center;
    justify-content: space-between;
    padding: 0 4px;
}
.hbar .thumb {
    flex: 1;
    height: 7px;
    margin: 0 40px 0 5px;
    background: #303030;
}
.view-tabs {
    flex: none;
    height: 18px;
    display: flex;
}
.view-tabs button {
    width: 45px;
    height: 30px;
}
.view-tabs .active {
    background: #454545;
    border-right: 1px solid #6a6a6a;
}

/* documents */
.center {
    flex: 1;
    min-width: 0;
    margin-left: 6px;
    display: flex;
    flex-direction: column;
    overflow: hidden;
}
.doc-tabs {
    flex: none;
    display: flex;
    height: 34px;
    background: #252525;
    border-bottom: 1px solid #484848;
    font-size: 17px;
}
.doc-tabs button {
    padding: 0 1px 2px 9px;
}
.doc-tabs .active {
    color: #0aa0f5;
    font-weight: bold;
    padding: 0 9px 0 5px;
    border-bottom: 3px solid #0069b4;
}
.doc-tabs .active svg {
    margin-left: 16px;
}
.doc-list {
    margin: 8px 5px 0 auto;
    width: 15px;
    height: 15px;
    padding: 2px;
    border: 1px solid #484848;
}
.doc-list svg {
    display: block;
}
.docs {
    flex: 1;
    min-height: 0;
    display: flex;
    padding: 2px 3px 0 3px;
    gap: 6px;
}
.sheet {
    flex: 1;
    min-width: 0;
    margin-top: 2px;
    border: 2px solid;
    border-color: #808080 #fff #fff #808080;
    background: #c0c0c0;
}
.sheet svg {
    display: block;
    width: 100%;
    height: 100%;
    font-family: "Noto Sans", "Open Sans", sans-serif;
}
.insert {
    flex: none;
    width: 240px;
    display: flex;
    flex-direction: column;
}
.insert .panel-head {
    height: 35px;
}
.insert-bar {
    display: flex;
    flex-direction: column;
    gap: 3px;
    padding: 1px 0 4px;
    background: #252525;
    font-size: 13px;
}
.bar-row {
    display: flex;
    align-items: flex-start;
    gap: 3px;
}
.bar-row button {
    display: flex;
    align-items: center;
    justify-content: center;
    width: 25px;
    height: 23px;
    border: 1px solid #454545;
}
.bar-row .tall {
    height: 31px;
}
.field, .crumb {
    flex: 1;
    display: flex;
    align-items: center;
    height: 23px;
    padding: 0 4px 0 7px;
    border: 2px solid #454545;
    background: #2a2a2a;
}
.crumb {
    gap: 10px;
    padding-left: 5px;
}
.field input {
    font-size: 16px;
    line-height: 18px;
}
.insert-list {
    flex: 1;
    padding: 6px 9px;
    background: #303030;
    font-size: 12px;
    line-height: 16px;
}
.insert-list li {
    display: flex;
    align-items: center;
    gap: 5px;
    height: 30px;
    padding-right: 40px;
}
.insert-list svg {
    width: 20px;
    height: 20px;
}
.insert-split {
    height: 12px;
    background: #454545;
    border-top: 7px solid #252525;
}
.insert-preview {
    height: 136px;
    background: #252525;
}
.status {
    flex: none;
    display: flex;
    gap: 12px;
    height: 12px;
    margin: 0 3px;
    padding: 0 5px 0 6px;
    background: #555;
    font-size: 17px;
    white-space: nowrap;
}
.coords {
    flex: 1;
}
.gridsize {
    margin-left: 10px;
}
.snap {
    height: 20px;
    margin-top: 2px;
    padding: 0 4px;
    background: #404040;
}
.snap b {
    font-size: 20px;
}
.dots {
    padding-top: 2px;
    line-height: 10px;
}
.dots svg + svg {
    margin-left: 6px;
}
.zoomer {
    margin-left: 8px;
}
.dock {
    flex: none;
    width: 36px;
    padding-top: 3px;
}
.dock button {
    writing-mode: vertical-rl;
    width: 36px;
    height: 113px;
    text-align: left;
    padding-top: 2px;
    border-right: 6px solid #484848;
}

/* taskbar */
.taskbar {
    flex: none;
    display: flex;
    height: 40px;
    background: #152c40;
    color: #fff;
}
.start {
    width: 48px;
    line-height: 16px;
}
.search {
    display: flex;
    align-items: center;
    gap: 12px;
    width: 288px;
    padding: 0 11px;
    border: 1px solid #5f7d93;
    background: #34536a;
    font-size: 15px;
}
.search input::placeholder {
    color: #dbe3e9;
    opacity: 1;
}
.apps {
    display: flex;
}
.apps button {
    display: flex;
    align-items: center;
    justify-content: center;
    position: relative;
    width: 49px;
    border-bottom: 2px solid transparent;
}
.apps svg {
    width: 24px;
    height: 24px;
}
.apps .run {
    border-color: #86c8ee;
    border-image: linear-gradient(90deg, transparent 5px, #86c8ee 5px, #86c8ee 44px, transparent 44px) 2;
}
.apps .current {
    background: linear-gradient(transparent 26px, #0d4a88 26px) center / 42px 100% no-repeat;
}
.badge {
    position: absolute;
    right: 3px;
    bottom: 3px;
    width: 18px;
    height: 18px;
    border: 1px solid #8aa5bb;
    border-radius: 50%;
    background: #0d4080;
    font-size: 12px;
    font-weight: bold;
    line-height: 16px;
    text-align: center;
}
.tray {
    margin-left: auto;
    display: flex;
    align-items: center;
    border-right: 1px solid #4f6577;
    margin-right: 4px;
    font-size: 13px;
    line-height: 18px;
}
.tray button {
    width: 24px;
    height: 40px;
    position: relative;
    line-height: 18px;
}
.tray svg {
    width: 17px;
    height: 17px;
    vertical-align: middle;
}
.tray .weather {
    display: flex;
    align-items: center;
    gap: 9px;
    width: auto;
    margin-right: 18px;
    font-size: 14px;
}
.sun {
    position: relative;
    width: 20px;
    height: 20px;
    border-radius: 50%;
    background: linear-gradient(135deg, #fbc02d, #f07c1d);
}
.sun i {
    position: absolute;
    right: -2px;
    top: -2px;
    width: 12px;
    height: 12px;
    border-radius: 50%;
    background: #c41e2a;
    font-size: 9px;
    font-style: normal;
    line-height: 12px;
}
.tray .lang {
    width: 36px;
    font-size: 15px;
}
.tray .clock {
    display: flex;
    flex-direction: column;
    align-items: center;
    justify-content: center;
    width: 64px;
    font-size: 12px;
}
.tray .notes {
    width: 50px;
}
.tray .notes .badge {
    right: 11px;
}
.stamp {
    position: absolute;
    left: 840px;
    bottom: 22px;
    color: #fff;
    opacity: 0.3;
    font-family: "DejaVu Sans", sans-serif;
    font-size: 72px;
    line-height: 60px;
    pointer-events: none;
}
```
FILE: script.js
```
const pages = [
    '4 EXT160 Main AC Drive PM', '4-1 EX160 Main AC Drive CM', '5 EXT120 Main DC Drive',
    '5-1 EXT120 Main DC Drive', '6 EXT150 Main DC Drive', '6-1 EXT120 Main DC Drive',
    '7 EXT160 Plastic Granules Unit', '8 EXT150 Plastic Granules Unit', '9 EXT120 Plastic Granules Unit',
    '10 EXT160&amp;150 Cooling Unit', '11 EXT120 Cooling Unit', '12 VACUUM &amp; DRYER MOTOR',
    '13 HOT WATER BOILER HEATER', '14 HOT WATER PUMP 1', '15 HOT WATER PUMP 2', '16 NETWORK VIEW',
    '17 PLC Feeding', '18 PLC INPUTS BYTE 44', '19 PLC INPUTS BYTE 45', '20 PLC INPUTS BYTE 46',
    '21 PLC INPUTS BYTE 47', '22 PLC INPUTS BYTE 48', '23 PLC INPUTS BYTE 49', '24 PLC OUTPUTS BYTE 4'
];
document.getElementById('tree').innerHTML = pages.map((p, i) =>
    `<li${i === pages.length - 1 ? ' class="active"' : ''}><svg width="17" height="14"><use href="#schem"/></svg><span>${p}</span></li>`
).join('');

const NAVY = '#000080', RED = '#a80c0c', DARK = '#300808', PINK = '#ff00ff';
const FRAME = '#5050a0';
const GRID = 11.82;
let out = '';

function line(d, color, width = 1, extra = '') {
    out += `<path d="${d}" fill="none" stroke="${color}" stroke-width="${width}" ${extra}/>`;
}
function text(x, y, s, color, size = 9, anchor = 'start') {
    out += `<text x="${x}" y="${y}" fill="${color}" font-size="${size}" text-anchor="${anchor}">${s}</text>`;
}

// frame with column numbers
line('M379 1030V259H1621V1030M379 274H1621', FRAME, 2);
for (let i = 0; i < 10; i++) {
    if (i) line(`M${Math.round(379 + i * 124.2) + 0.5} 259v15`, NAVY);
    text(Math.round(441 + i * 124.2), 270, i, NAVY, 6, 'middle');
}

// plc card
const dash = 'stroke-dasharray="7 5"';
line('M438 368.5H1596', PINK, 1, dash);
line('M438 392H1596M438 463H1596', '#e44fe0', 2, dash);
line('M438 369V463', '#e44fe0', 2, dash);
line('M1596.5 369V463', PINK, 1, dash);
text(434, 379, '-D1704', NAVY, 9, 'end');
text(434, 388, '/17.5', DARK, 7, 'end');
text(434, 396, '/25.0', DARK, 7, 'end');
text(434, 406, 'Rack 1', NAVY, 9, 'end');
text(434, 417, 'Slot 4', NAVY, 9, 'end');
text(457, 384, 'OUTPUT BYET 4', NAVY);
text(675, 384, '6ES7 132-6BH01-0BA0', NAVY);
text(983, 384, 'DQ 16x24VDC/0.5A ST', NAVY);
text(1547, 384, 'SIEMENS', NAVY);

// outputs
const columns = [
    [485.5, 'LAMP POWER ON', 'DO0'], [603.5, 'K POWER ON', 'DO2'], [721.5, 'R SPARE', 'DO3'],
    [828.5, 'R SPARE(1)', 'DO4'], [946.5, 'MAT MOTOR 160', 'DO5'], [1064.5, 'MAT MOTOR 150', 'DO6'],
    [1182.5, 'MAT MOTOR 120', 'DO7'], [1300.5, 'GEARBOX COOLING 120', 'DO8']
];
columns.forEach(([x, name, out1], i) => {
    text(x, 337, name, DARK, 9, 'middle');
    text(x, 429, 'Q4.' + i, DARK, 10, 'middle');
    out += `<circle cx="${x}" cy="439.5" r="3" fill="none" stroke="${PINK}"/>`;
    line(`M${x} 442v9`, PINK);
    text(x + 7, 452, i + 1 + '.', NAVY, 7);
    text(x + 7, 460, out1, NAVY, i < 2 ? 7 : 5);
    line(`M${x} 451V782M${x} 806V865`, RED);
    line(`M${x - 4} 612l7 7`, RED);
    text(x + 7, 616, '240' + (i + 1), RED, 5);
    line(`M${x} 782v6M${x} 800v6`, NAVY);
    if (i === 0) {
        out += `<circle cx="${x}" cy="794" r="6" fill="none" stroke="${NAVY}"/>`;
        line(`M${x - 4} 790l8 8M${x + 4} 790l-8 8`, NAVY);
        text(x + 2, 785, 'x1', NAVY, 7);
        text(x + 2, 808, 'x2', NAVY, 7);
        text(x - 12, 798, '-H2401', NAVY, 9, 'end');
    } else {
        out += `<rect x="${x - 12}" y="787.5" width="24" height="12" fill="none" stroke="${NAVY}"/>`;
        text(x + 2, 785, 'A1', NAVY, 7);
        text(x + 2, 808, 'A2', NAVY, 7);
        text(x - 18, 798, '-K240' + i, NAVY, 9, 'end');
    }
    out += `<circle cx="${x}" cy="865" r="3" fill="${RED}"/>`;
});
[[1419.5, 'DC24V', 'DG24V'], [1525.5, 'DC0V', 'DG0V']].forEach(([x, a, b]) => {
    text(x, 435, a, DARK, 7, 'middle');
    out += `<circle cx="${x}" cy="439.5" r="3" fill="none" stroke="${PINK}"/>`;
    line(`M${x} 442v9`, PINK);
    text(x + 7, 453, b, NAVY, 5);
});

// 0VDC rail
line('M433 865H1540', RED);
out += `<path d="M435 861l11 4-11 4zM1534 861l11 4-11 4z" fill="${RED}"/>`;
text(387, 867, '17.9 /', DARK, 6);
text(430, 869, '0VDC', NAVY, 9, 'end');
text(1546, 869, '0VDC', NAVY);
text(1571, 868, '/ 25.0', DARK, 7);

// contact mirrors
[[946, '/7.2'], [1064, '/8.2'], [1182, '/9.2']].forEach(([x, ref]) => {
    for (let r = 0; r < 3; r++) {
        const y = 964 + r * 10;
        text(x - 15, y + 2, r * 2 + 1, NAVY, 7);
        line(`M${x - 9} ${y}h5c0 4-5 4-5 0M${x - 5} ${y + 5}l8-5h6M${x} ${y + 2}v4`, NAVY);
        text(x + 11, y + 2, r * 2 + 2, NAVY, 7);
    }
    text(x + 17, 986, ref, DARK, 7);
});
text(1282, 966, '13', NAVY, 7);
line('M1292 964h5M1296 969l7-5h6', NAVY);
text(1312, 966, '14', NAVY, 7);
text(1322, 966, '/11.6', DARK, 7);

// grid dots sit on whole pixels
let dots = '';
for (let r = 0; r <= 66; r++) {
    for (let c = 0; c <= 107; c++) {
        dots += `M${Math.floor(367.3 + c * GRID)} ${Math.floor(238.3 + r * GRID)}h1v1h-1z`;
    }
}
out += `<path d="${dots}" fill="#000" shape-rendering="crispEdges"/>`;

// cursor cross
line('M526.5 234V1030M366 1017.5H1640', '#c00000');
document.getElementById('sheet').innerHTML = out;
```
